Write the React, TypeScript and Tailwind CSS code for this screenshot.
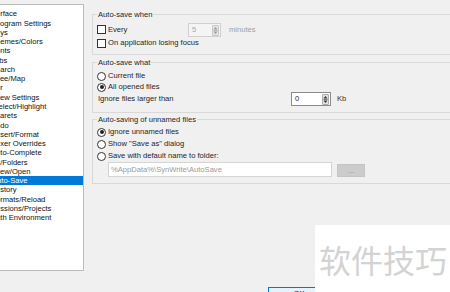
import React from "react";

const items: [string, string][] = [
  ["Interface", "-ml-[12.5px]"],
  ["Program Settings", "-ml-[7.5px]"],
  ["Keys", "-ml-[9px]"],
  ["Themes/Colors", "-ml-[8.7px]"],
  ["Fonts", "-ml-[8.7px]"],
  ["Tabs", "-ml-[8.7px]"],
  ["Search", "-ml-[9px]"],
  ["Tree/Map", "-ml-[7px]"],
  ["Editor", "-ml-[17px]"],
  ["View Settings", "-ml-[6.7px]"],
  ["Select/Highlight", "-ml-[6.5px]"],
  ["Carets", "-ml-[5.4px]"],
  ["Undo", "-ml-[9.5px]"],
  ["Insert/Format", "-ml-[6.2px]"],
  ["Lexer Overrides", "-ml-[8.3px]"],
  ["Auto-Complete", "-ml-[9px]"],
  ["Files/Folders", "-ml-[15.8px]"],
  ["New/Open", "-ml-[5.4px]"],
  ["Auto-Save", "-ml-[8px]"],
  ["History", "-ml-[7px]"],
  ["Formats/Reload", "-ml-[8.7px]"],
  ["Sessions/Projects", "-ml-[9px]"],
  ["Path Environment", "-ml-[9px]"],
];

function Group({ title, className, children }: { title: string; className: string; children: React.ReactNode }) {
  return (
    <div className={`relative shrink-0 border border-[#d9d9d9] pl-[4px] ${className}`}>
      <span className="absolute left-[4px] top-[-5px] px-[1px] bg-[#f0f0f0] leading-[9px] whitespace-nowrap">{title}</span>
      {children}
    </div>
  );
}

function Check() {
  return <span className="w-[9px] h-[9px] shrink-0 border border-[#333] bg-white" />;
}

function Radio({ on }: { on?: boolean }) {
  return (
    <span className="w-[9px] h-[9px] shrink-0 rounded-full border border-[#333] bg-white flex items-center justify-center">
      {on && <span className="w-[4px] h-[4px] rounded-full bg-[#222]" />}
    </span>
  );
}

function Spin({ disabled }: { disabled?: boolean }) {
  const c = disabled ? "#9a9a9a" : "#333";
  return (
    <span className={`w-[7px] h-[11px] shrink-0 rounded-[1px] border ${disabled ? "border-[#c8c8c8] bg-[#e4e4e4]" : "border-[#adadad] bg-[#e1e1e1]"} flex items-center justify-center`}>
      <svg width="5" height="9" viewBox="0 0 5 9">
        <path d="M2.5 1 L4.5 3.5 L0.5 3.5 Z" fill={c} />
        <line x1="0.5" y1="4.5" x2="4.5" y2="4.5" stroke={c} strokeWidth="0.6" />
        <path d="M0.5 5.5 L4.5 5.5 L2.5 8 Z" fill={c} />
      </svg>
    </span>
  );
}

export default function App() {
  return (
    <div className="relative w-[450px] h-[292px] overflow-hidden bg-[#f0f0f0] flex font-['Liberation_Sans',Arial,sans-serif] text-[#1f1f1f]">
      <div className="mt-[4px] w-[84px] h-[267px] shrink-0 bg-white border-t border-b border-r border-[#bcbcbc] overflow-hidden pt-[4.4px] text-[7.6px] text-[#111]">
        {items.map(([t, c]) => (
          <div
            key={t}
            className={`h-[9.27px] flex items-center whitespace-nowrap ${t === "Auto-Save" ? "bg-[#0078d7] text-white" : ""}`}
          >
            <span className={c}>{t}</span>
          </div>
        ))}
      </div>

      <div className="ml-[8px] w-[400px] shrink-0 pt-[14px] flex flex-col text-[7.6px]">
        <Group title="Auto-save when" className="h-[41px] pt-[8px]">
          <div className="h-[14px] flex items-center">
            <div className="w-[91px] flex items-center">
              <Check />
              <span className="ml-[2px]">Every</span>
            </div>
            <div className="w-[33px] h-[14px] border border-[#d0d0d0] bg-[#f4f4f4] flex items-center justify-between pl-[3px] pr-[1px] text-[#a8a8a8]">
              <span>5</span>
              <Spin disabled />
            </div>
            <span className="ml-[8px] text-[#a0a0a0]">minutes</span>
          </div>
          <div className="h-[12px] flex items-center">
            <Check />
            <span className="ml-[2px]">On application losing focus</span>
          </div>
        </Group>

        <Group title="Auto-save what" className="mt-[7px] h-[51px] pt-[7px]">
          <div className="h-[12px] flex items-center">
            <Radio />
            <span className="ml-[2px]">Current file</span>
          </div>
          <div className="h-[10px] flex items-center">
            <Radio on />
            <span className="ml-[2px]">All opened files</span>
          </div>
          <div className="h-[14px] flex items-center">
            <span className="w-[194px] pl-[1px]">Ignore files larger than</span>
            <div className="w-[40px] h-[14px] border border-[#8a8a8a] bg-white flex items-center justify-between pl-[3px] pr-[1px]">
              <span>0</span>
              <Spin />
            </div>
            <span className="ml-[6px] text-[#333]">Kb</span>
          </div>
        </Group>

        <Group title="Auto-saving of unnamed files" className="mt-[6px] h-[65px] pt-[6px]">
          <div className="h-[12px] flex items-center">
            <Radio on />
            <span className="ml-[2px]">Ignore unnamed files</span>
          </div>
          <div className="h-[12px] flex items-center">
            <Radio />
            <span className="ml-[2px]">Show "Save as" dialog</span>
          </div>
          <div className="h-[12px] flex items-center">
            <Radio />
            <span className="ml-[2px]">Save with default name to folder:</span>
          </div>
          <div className="h-[15px] flex items-end">
            <div className="ml-[11px] w-[224px] h-[15px] border border-[#d4d4d4] bg-white flex items-center pl-[2px] text-[#9a9a9a] whitespace-nowrap">
              %AppData%\SynWrite\AutoSave
            </div>
            <div className="ml-[5px] w-[28px] h-[13px] border border-[#c4c4c4] bg-[#cccccc] flex items-center justify-center text-[#8a8a8a] leading-none">
              ...
            </div>
          </div>
        </Group>

        <div className="mt-[103px] ml-[176px] w-[62px] h-[14px] shrink-0 border border-[#0078d7] bg-[#e5f1fb] flex items-center justify-center text-[7.6px]">
          OK
        </div>
      </div>

      <div className="absolute left-[315px] top-[225px] w-[135px] h-[67px] bg-white flex items-center pl-[4px]">
        <span className="text-[32px] leading-none text-[#d3d3d3] whitespace-nowrap font-['Noto_Sans_CJK_SC',sans-serif]">软件技巧</span>
      </div>
    </div>
  );
}
